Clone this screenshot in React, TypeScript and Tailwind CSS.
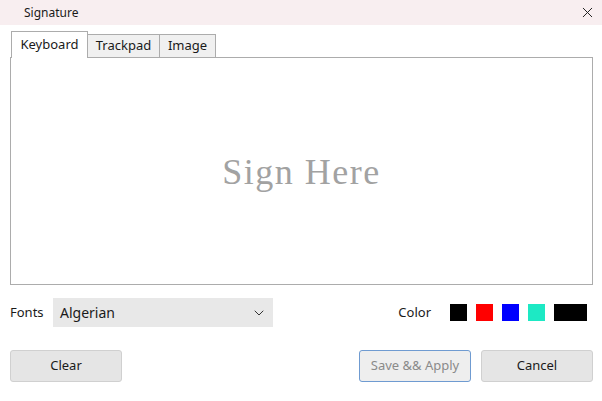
import { ChevronDown, X } from "lucide-react";

const swatches = [
  "w-[17px] bg-black",
  "w-[17px] bg-[#ff0000]",
  "w-[17px] bg-[#0000ff]",
  "w-[17px] bg-[#1de9c4]",
  "w-[33px] bg-black",
];

export default function App() {
  return (
    <div className="flex h-[401px] w-[602px] flex-col bg-white font-['Noto_Sans','Open_Sans',sans-serif] text-[13px] text-[#1a1a1a]">
      <div className="flex h-[25px] items-center justify-between bg-[#f8eef0] pl-[24px] pr-[6px]">
        <span className="text-[12px]">Signature</span>
        <X className="h-[17px] w-[17px] text-[#222]" strokeWidth={1.4} />
      </div>

      <div className="flex flex-col pl-[10px] pr-[9px] pt-[6px]">
        <div className="flex items-end pl-[1px]">
          <div className="relative z-10 -mb-px flex h-[27px] w-[77px] items-center justify-center border border-b-0 border-[#acacac] bg-white">
            Keyboard
          </div>
          <div className="flex h-[23px] w-[72px] items-center justify-center border border-b-0 border-l-0 border-[#acacac] bg-[#f0f0f0]">
            Trackpad
          </div>
          <div className="flex h-[23px] w-[56px] items-center justify-center border border-b-0 border-l-0 border-[#acacac] bg-[#f0f0f0]">
            Image
          </div>
        </div>
        <div className="flex h-[228px] items-center justify-center border border-[#acacac] bg-white pt-[2px]">
          <span className="font-['Liberation_Serif','DejaVu_Serif',serif] text-[36px] tracking-[1.5px] text-[#a2a2a2]">
            Sign Here
          </span>
        </div>
      </div>

      <div className="mt-[13px] flex items-center pl-[10px] pr-[9px]">
        <span className="w-[43px]">Fonts</span>
        <div className="flex h-[29px] w-[220px] items-center justify-between bg-[#e8e8e8] pl-[7px] pr-[6px]">
          <span className="text-[14px]">Algerian</span>
          <ChevronDown className="h-[16px] w-[16px] text-[#333]" strokeWidth={1.5} />
        </div>
        <span className="ml-auto mr-[19px]">Color</span>
        <div className="flex items-center gap-[9px] pr-[6px]">
          {swatches.map((s, i) => (
            <div key={i} className={`h-[17px] ${s}`} />
          ))}
        </div>
      </div>

      <div className="mt-[23px] flex items-center pl-[10px] pr-[9px]">
        <button className="h-[32px] w-[112px] rounded-[3px] border border-[#d0d0d0] bg-[#e5e5e5]">
          Clear
        </button>
        <button className="ml-auto h-[32px] w-[112px] rounded-[3px] border border-[#6f9bd1] bg-[#eeeeee] text-[#8a8a8a]">
          Save &amp;&amp; Apply
        </button>
        <button className="ml-[10px] h-[32px] w-[112px] rounded-[3px] border border-[#d0d0d0] bg-[#e5e5e5]">
          Cancel
        </button>
      </div>
    </div>
  );
}
